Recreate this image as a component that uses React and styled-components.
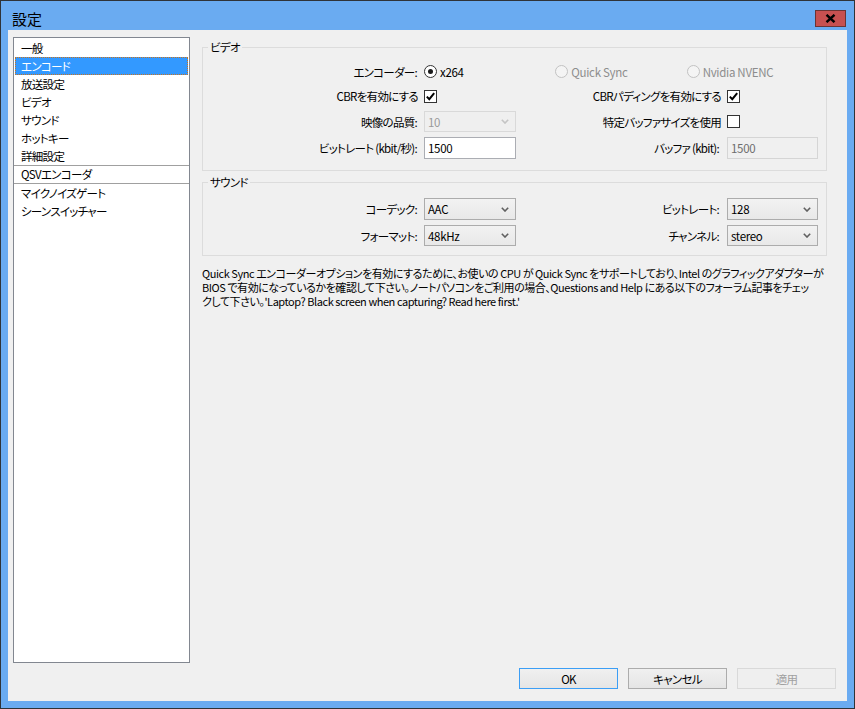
import React from 'react';
import styled, { createGlobalStyle } from 'styled-components';

const Global = createGlobalStyle`
  html, body { margin: 0; padding: 0; overflow: hidden; background: #fff; }
  body {
    font-family: "Noto Sans CJK JP", "Noto Sans", sans-serif;
    font-size: 11.5px;
    letter-spacing: -0.7px;
    color: #000;
    font-feature-settings: "palt";
  }
  * { box-sizing: border-box; }
`;

const Window = styled.div`
  width: 855px;
  height: 709px;
  border: 1px solid #2f3338;
  background: #6aabf1;
  display: flex;
  flex-direction: column;
`;

const TitleBar = styled.div`
  height: 29px;
  flex-shrink: 0;
  display: flex;
  align-items: flex-start;
  justify-content: space-between;
  padding: 0 8px 0 11px;
`;

const TitleText = styled.div`
  margin-top: 9px;
  font-size: 15px;
  letter-spacing: 0;
  line-height: 17px;
`;

const CloseButton = styled.div`
  margin-top: 9px;
  width: 31px;
  height: 17px;
  background: #c75050;
  border: 1px solid #6b3434;
  display: flex;
  align-items: center;
  justify-content: center;
`;

const Client = styled.div`
  flex: 1;
  margin: 0 7px 7px;
  background: #f0f0f0;
  display: flex;
  flex-direction: column;
  padding: 7px 11px 12px 5px;
  min-height: 0;
`;

const Main = styled.div`
  flex: 1;
  display: flex;
  gap: 12px;
  min-height: 0;
`;

const ListBox = styled.div`
  width: 177px;
  flex-shrink: 0;
  border: 1px solid #828790;
  background: #fff;
  padding-top: 1px;
`;

const ListItem = styled.div`
  height: ${p => p.$h || 18}px;
  line-height: ${p => (p.$h || 18) - 2}px;
  margin: 0 1px;
  padding-left: 5px;
  border: 1px dotted ${p => (p.$selected ? '#c8731f' : 'transparent')};
  background: ${p => (p.$selected ? '#3399ff' : 'transparent')};
  color: ${p => (p.$selected ? '#fff' : '#000')};
  white-space: nowrap;
`;

const ListSeparator = styled.div`
  height: 1px;
  background: #a0a0a0;
`;

const RightPanel = styled.div`
  flex: 1;
  padding-top: 10px;
  margin-right: 9px;
  display: flex;
  flex-direction: column;
  min-width: 0;
`;

const Group = styled.div`
  position: relative;
  border: 1px solid #dcdcdc;
  padding: ${p => p.$pt}px 8px ${p => p.$pb}px 0;
  margin-top: ${p => p.$mt || 0}px;
`;

const Legend = styled.div`
  position: absolute;
  top: -9px;
  left: 5px;
  padding: 0 2px;
  background: #f0f0f0;
  line-height: 16px;
`;

const FormGrid = styled.div`
  display: grid;
  grid-template-columns: 215px 92px 1fr 91px;
  grid-template-rows: ${p => p.$rows};
  column-gap: 6px;
  row-gap: 5px;
`;

const FieldLabel = styled.div`
  display: flex;
  align-items: center;
  justify-content: flex-end;
  white-space: nowrap;
  padding-right: ${p => p.$pr || 0}px;
`;

const Cell = styled.div`
  display: flex;
  align-items: center;
`;

const RadioRow = styled.div`
  grid-column: 2 / 5;
  display: flex;
  align-items: center;
`;

const RadioItem = styled.div`
  width: 132px;
  display: flex;
  align-items: center;
  gap: 3px;
  letter-spacing: -0.3px;
  color: ${p => (p.$disabled ? '#8d8d8d' : '#000')};
`;

const RadioCircle = styled.span`
  width: 13px;
  height: 13px;
  border-radius: 50%;
  border: 1px solid ${p => (p.$disabled ? '#c2c2c2' : '#333')};
  background: ${p => (p.$disabled ? '#f4f4f4' : '#fff')};
  display: flex;
  align-items: center;
  justify-content: center;
  &::after {
    content: '';
    display: ${p => (p.$checked ? 'block' : 'none')};
    width: 5px;
    height: 5px;
    border-radius: 50%;
    background: #1a1a1a;
  }
`;

const CheckBox = styled.span`
  width: 13px;
  height: 13px;
  border: 1px solid #333;
  background: #fff;
  display: flex;
  align-items: center;
  justify-content: center;
`;

const Combo = styled.div`
  width: 100%;
  height: 100%;
  border: 1px solid ${p => (p.$disabled ? '#d9d9d9' : '#acacac')};
  background: ${p => (p.$disabled ? '#efefef' : 'linear-gradient(#f2f2f2, #e8e8e8)')};
  color: ${p => (p.$disabled ? '#9a9a9a' : '#000')};
  letter-spacing: -0.3px;
  display: flex;
  align-items: center;
  justify-content: space-between;
  padding: 0 6px 0 3px;
`;

const TextInput = styled.div`
  width: 100%;
  height: 100%;
  border: 1px solid ${p => (p.$disabled ? '#d5d5d5' : '#abadb3')};
  background: ${p => (p.$disabled ? '#f0f0f0' : '#fff')};
  color: ${p => (p.$disabled ? '#6d6d6d' : '#000')};
  letter-spacing: -0.3px;
  display: flex;
  align-items: center;
  padding-left: 3px;
`;

const Paragraph = styled.div`
  margin-top: 10px;
  line-height: 14px;
  font-size: 11px;
  letter-spacing: -0.45px;
`;

const Line = styled.div`
  white-space: nowrap;
`;

const ButtonBar = styled.div`
  display: flex;
  justify-content: flex-end;
  gap: 10px;
  margin-top: 5px;
`;

const Button = styled.div`
  width: 99px;
  height: 21px;
  display: flex;
  align-items: center;
  justify-content: center;
  border: 1px solid ${p => (p.$default ? '#3c9ef5' : p.$disabled ? '#d9d9d9' : '#acacac')};
  background: ${p => (p.$disabled ? '#efefef' : 'linear-gradient(#f0f0f0, #e5e5e5)')};
  color: ${p => (p.$disabled ? '#a0a0a0' : '#000')};
`;

const Arrow = ({ disabled }) => (
  <svg width="8" height="5" viewBox="0 0 8 5">
    <path d="M0.8 0.8 L4 4 L7.2 0.8" fill="none" stroke={disabled ? '#c4c4c4' : '#606060'} strokeWidth="1.6" />
  </svg>
);

const Check = () => (
  <svg width="11" height="11" viewBox="0 0 11 11">
    <path d="M1.8 5.6 L4.3 8.2 L9.2 2.2" fill="none" stroke="#000" strokeWidth="2" />
  </svg>
);

const listItems = ['一般', 'エンコード', '放送設定', 'ビデオ', 'サウンド', 'ホットキー', '詳細設定'];

export default function App() {
  return (
    <>
      <Global />
      <Window>
        <TitleBar>
          <TitleText>設定</TitleText>
          <CloseButton>
            <svg width="11" height="9" viewBox="0 0 11 9">
              <path d="M1.5 0.8 L9.5 8.2 M9.5 0.8 L1.5 8.2" stroke="#000" strokeWidth="2.4" />
            </svg>
          </CloseButton>
        </TitleBar>
        <Client>
          <Main>
            <ListBox>
              {listItems.map(t => (
                <ListItem key={t} $selected={t === 'エンコード'}>{t}</ListItem>
              ))}
              <ListSeparator />
              <ListItem $h={17}>QSVエンコーダ</ListItem>
              <ListSeparator />
              <ListItem>マイクノイズゲート</ListItem>
              <ListItem>シーンスイッチャー</ListItem>
            </ListBox>
            <RightPanel>
              <Group $pt={14} $pb={11}>
                <Legend>ビデオ</Legend>
                <FormGrid $rows="19px 20px 21px 22px">
                  <FieldLabel $pr={1}>エンコーダー:</FieldLabel>
                  <RadioRow>
                    <RadioItem><RadioCircle $checked />x264</RadioItem>
                    <RadioItem $disabled><RadioCircle $disabled />Quick Sync</RadioItem>
                    <RadioItem $disabled><RadioCircle $disabled />Nvidia NVENC</RadioItem>
                  </RadioRow>

                  <FieldLabel>CBRを有効にする</FieldLabel>
                  <Cell><CheckBox><Check /></CheckBox></Cell>
                  <FieldLabel>CBRパディングを有効にする</FieldLabel>
                  <Cell><CheckBox><Check /></CheckBox></Cell>

                  <FieldLabel $pr={1}>映像の品質:</FieldLabel>
                  <Cell><Combo $disabled><span>10</span><Arrow disabled /></Combo></Cell>
                  <FieldLabel>特定バッファサイズを使用</FieldLabel>
                  <Cell><CheckBox /></Cell>

                  <FieldLabel $pr={1}>ビットレート (kbit/秒):</FieldLabel>
                  <Cell><TextInput>1500</TextInput></Cell>
                  <FieldLabel $pr={2}>バッファ (kbit):</FieldLabel>
                  <Cell><TextInput $disabled>1500</TextInput></Cell>
                </FormGrid>
              </Group>

              <Group $pt={15} $pb={9} $mt={11}>
                <Legend>サウンド</Legend>
                <FormGrid $rows="22px 21px">
                  <FieldLabel $pr={1}>コーデック:</FieldLabel>
                  <Cell><Combo><span>AAC</span><Arrow /></Combo></Cell>
                  <FieldLabel $pr={2}>ビットレート:</FieldLabel>
                  <Cell><Combo><span>128</span><Arrow /></Combo></Cell>

                  <FieldLabel $pr={1}>フォーマット:</FieldLabel>
                  <Cell><Combo><span>48kHz</span><Arrow /></Combo></Cell>
                  <FieldLabel $pr={2}>チャンネル:</FieldLabel>
                  <Cell><Combo><span>stereo</span><Arrow /></Combo></Cell>
                </FormGrid>
              </Group>

              <Paragraph>
                <Line>Quick Sync エンコーダーオプションを有効にするために、お使いの CPU が Quick Sync をサポートしており、Intel のグラフィックアダプターが</Line>
                <Line>BIOS で有効になっているかを確認して下さい。ノートパソコンをご利用の場合、Questions and Help にある以下のフォーラム記事をチェッ</Line>
                <Line>クして下さい。'Laptop? Black screen when capturing? Read here first.'</Line>
              </Paragraph>
            </RightPanel>
          </Main>
          <ButtonBar>
            <Button $default>OK</Button>
            <Button>キャンセル</Button>
            <Button $disabled>適用</Button>
          </ButtonBar>
        </Client>
      </Window>
    </>
  );
}
